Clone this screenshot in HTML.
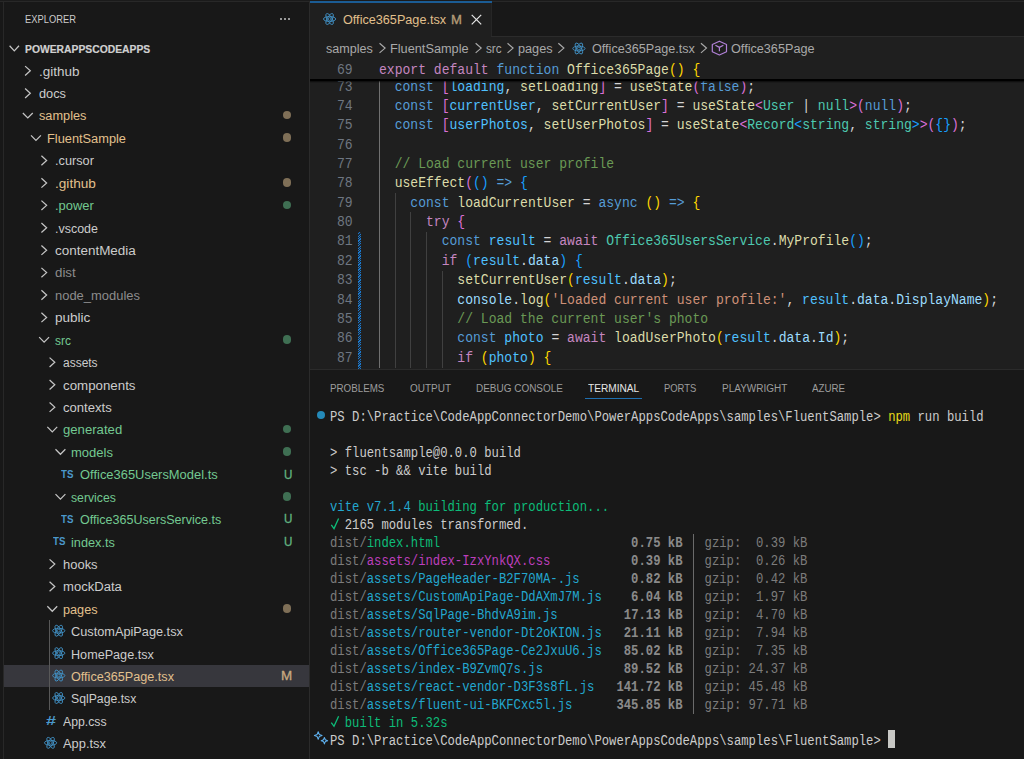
<!DOCTYPE html>
<html><head><meta charset="utf-8"><title>VS Code</title>
<style>
html,body{margin:0;padding:0;background:#181818;}
body{width:1024px;height:759px;position:relative;overflow:hidden;font-family:"Liberation Sans",sans-serif;}
.m{position:absolute;white-space:pre;font-family:"Liberation Mono",monospace;transform-origin:0 0;}
.s{position:absolute;white-space:pre;font-family:"Liberation Sans",sans-serif;transform-origin:0 0;}
</style></head><body>
<div style="position:absolute;left:0.00px;top:0.00px;width:1024.00px;height:759.00px;background:#181818;"></div>
<div style="position:absolute;left:0.00px;top:0.00px;width:1024.00px;height:1.00px;background:#1b1b1b;"></div>
<div style="position:absolute;left:0.00px;top:1.00px;width:1024.00px;height:1.00px;background:#282828;"></div>
<div style="position:absolute;left:3.00px;top:2.00px;width:1.10px;height:759.00px;background:#282828;"></div>
<div style="position:absolute;left:309.00px;top:2.00px;width:1.00px;height:759.00px;background:#2b2b2b;"></div>
<div style="position:absolute;left:310.00px;top:2.00px;width:714.00px;height:34.00px;background:#181818;"></div>
<div style="position:absolute;left:310.00px;top:35.60px;width:714.00px;height:1.00px;background:#2b2b2b;"></div>
<div style="position:absolute;left:310.00px;top:2.00px;width:180.90px;height:35.00px;background:#1f1f1f;"></div>
<div style="position:absolute;left:490.90px;top:3.00px;width:1.00px;height:33.00px;background:#262626;"></div>
<div style="position:absolute;left:310.00px;top:1.00px;width:181.50px;height:2.10px;background:#1b5c94;"></div>
<div style="position:absolute;left:310.00px;top:36.60px;width:714.00px;height:332.40px;background:#1f1f1f;"></div>
<div style="position:absolute;left:280.20px;top:18.30px;width:2.1px;height:2.1px;border-radius:50%;background:#c4c4c4"></div>
<div style="position:absolute;left:284.30px;top:18.30px;width:2.1px;height:2.1px;border-radius:50%;background:#c4c4c4"></div>
<div style="position:absolute;left:288.40px;top:18.30px;width:2.1px;height:2.1px;border-radius:50%;background:#c4c4c4"></div>
<svg style="position:absolute;left:8px;top:44px;overflow:visible" width="14" height="9"><g transform="translate(0.60 0.75)"><path d="M1.00 1.00 L5.70 6.10 L10.40 1.00" fill="none" stroke="#c5c5c5" stroke-width="1.25"/></g></svg>
<div style="position:absolute;left:4.00px;top:664.90px;width:305.00px;height:22.20px;background:#37373d;"></div>
<div style="position:absolute;left:49.30px;top:620.20px;width:1.00px;height:89.60px;background:#585858;"></div>
<svg style="position:absolute;left:24px;top:65px;overflow:visible" width="9" height="13"><g transform="translate(0.10 0.10)"><path d="M1.00 1.00 L6.20 5.70 L1.00 10.40" fill="none" stroke="#c5c5c5" stroke-width="1.25"/></g></svg>
<svg style="position:absolute;left:24px;top:87px;overflow:visible" width="9" height="13"><g transform="translate(0.10 0.52)"><path d="M1.00 1.00 L6.20 5.70 L1.00 10.40" fill="none" stroke="#c5c5c5" stroke-width="1.25"/></g></svg>
<svg style="position:absolute;left:21px;top:111px;overflow:visible" width="14" height="9"><g transform="translate(0.85 0.95)"><path d="M1.00 1.00 L5.95 6.00 L10.90 1.00" fill="none" stroke="#c5c5c5" stroke-width="1.25"/></g></svg>
<div style="position:absolute;left:283.10px;top:110.95px;width:8.4px;height:8.4px;border-radius:50%;background:#7f6f57"></div>
<svg style="position:absolute;left:30px;top:134px;overflow:visible" width="13" height="9"><g transform="translate(0.01 0.37)"><path d="M1.00 1.00 L5.95 6.00 L10.90 1.00" fill="none" stroke="#c5c5c5" stroke-width="1.25"/></g></svg>
<div style="position:absolute;left:283.10px;top:133.37px;width:8.4px;height:8.4px;border-radius:50%;background:#7f6f57"></div>
<svg style="position:absolute;left:40px;top:154px;overflow:visible" width="9" height="14"><g transform="translate(0.42 0.79)"><path d="M1.00 1.00 L6.20 5.70 L1.00 10.40" fill="none" stroke="#c5c5c5" stroke-width="1.25"/></g></svg>
<svg style="position:absolute;left:40px;top:177px;overflow:visible" width="9" height="13"><g transform="translate(0.42 0.22)"><path d="M1.00 1.00 L6.20 5.70 L1.00 10.40" fill="none" stroke="#c5c5c5" stroke-width="1.25"/></g></svg>
<div style="position:absolute;left:283.10px;top:178.22px;width:8.4px;height:8.4px;border-radius:50%;background:#7f6f57"></div>
<svg style="position:absolute;left:40px;top:199px;overflow:visible" width="9" height="14"><g transform="translate(0.42 0.64)"><path d="M1.00 1.00 L6.20 5.70 L1.00 10.40" fill="none" stroke="#c5c5c5" stroke-width="1.25"/></g></svg>
<div style="position:absolute;left:283.10px;top:200.64px;width:8.4px;height:8.4px;border-radius:50%;background:#3f6f53"></div>
<svg style="position:absolute;left:40px;top:222px;overflow:visible" width="9" height="13"><g transform="translate(0.42 0.06)"><path d="M1.00 1.00 L6.20 5.70 L1.00 10.40" fill="none" stroke="#c5c5c5" stroke-width="1.25"/></g></svg>
<svg style="position:absolute;left:40px;top:244px;overflow:visible" width="9" height="13"><g transform="translate(0.42 0.48)"><path d="M1.00 1.00 L6.20 5.70 L1.00 10.40" fill="none" stroke="#c5c5c5" stroke-width="1.25"/></g></svg>
<svg style="position:absolute;left:40px;top:266px;overflow:visible" width="9" height="14"><g transform="translate(0.42 0.91)"><path d="M1.00 1.00 L6.20 5.70 L1.00 10.40" fill="none" stroke="#c5c5c5" stroke-width="1.25"/></g></svg>
<svg style="position:absolute;left:40px;top:289px;overflow:visible" width="9" height="13"><g transform="translate(0.42 0.33)"><path d="M1.00 1.00 L6.20 5.70 L1.00 10.40" fill="none" stroke="#c5c5c5" stroke-width="1.25"/></g></svg>
<svg style="position:absolute;left:40px;top:311px;overflow:visible" width="9" height="14"><g transform="translate(0.42 0.75)"><path d="M1.00 1.00 L6.20 5.70 L1.00 10.40" fill="none" stroke="#c5c5c5" stroke-width="1.25"/></g></svg>
<svg style="position:absolute;left:38px;top:336px;overflow:visible" width="14" height="9"><g transform="translate(0.17 0.18)"><path d="M1.00 1.00 L5.95 6.00 L10.90 1.00" fill="none" stroke="#c5c5c5" stroke-width="1.25"/></g></svg>
<div style="position:absolute;left:283.10px;top:335.18px;width:8.4px;height:8.4px;border-radius:50%;background:#3f6f53"></div>
<svg style="position:absolute;left:48px;top:356px;overflow:visible" width="9" height="13"><g transform="translate(0.58 0.60)"><path d="M1.00 1.00 L6.20 5.70 L1.00 10.40" fill="none" stroke="#c5c5c5" stroke-width="1.25"/></g></svg>
<svg style="position:absolute;left:48px;top:379px;overflow:visible" width="9" height="13"><g transform="translate(0.58 0.02)"><path d="M1.00 1.00 L6.20 5.70 L1.00 10.40" fill="none" stroke="#c5c5c5" stroke-width="1.25"/></g></svg>
<svg style="position:absolute;left:48px;top:401px;overflow:visible" width="9" height="13"><g transform="translate(0.58 0.44)"><path d="M1.00 1.00 L6.20 5.70 L1.00 10.40" fill="none" stroke="#c5c5c5" stroke-width="1.25"/></g></svg>
<svg style="position:absolute;left:46px;top:425px;overflow:visible" width="14" height="9"><g transform="translate(0.33 0.87)"><path d="M1.00 1.00 L5.95 6.00 L10.90 1.00" fill="none" stroke="#c5c5c5" stroke-width="1.25"/></g></svg>
<div style="position:absolute;left:283.10px;top:424.87px;width:8.4px;height:8.4px;border-radius:50%;background:#3f6f53"></div>
<svg style="position:absolute;left:54px;top:448px;overflow:visible" width="14" height="9"><g transform="translate(0.49 0.29)"><path d="M1.00 1.00 L5.95 6.00 L10.90 1.00" fill="none" stroke="#c5c5c5" stroke-width="1.25"/></g></svg>
<div style="position:absolute;left:283.10px;top:447.29px;width:8.4px;height:8.4px;border-radius:50%;background:#3f6f53"></div>
<svg style="position:absolute;left:54px;top:493px;overflow:visible" width="14" height="9"><g transform="translate(0.49 0.14)"><path d="M1.00 1.00 L5.95 6.00 L10.90 1.00" fill="none" stroke="#c5c5c5" stroke-width="1.25"/></g></svg>
<div style="position:absolute;left:283.10px;top:492.14px;width:8.4px;height:8.4px;border-radius:50%;background:#3f6f53"></div>
<svg style="position:absolute;left:48px;top:558px;overflow:visible" width="9" height="13"><g transform="translate(0.58 0.41)"><path d="M1.00 1.00 L6.20 5.70 L1.00 10.40" fill="none" stroke="#c5c5c5" stroke-width="1.25"/></g></svg>
<svg style="position:absolute;left:48px;top:580px;overflow:visible" width="9" height="14"><g transform="translate(0.58 0.83)"><path d="M1.00 1.00 L6.20 5.70 L1.00 10.40" fill="none" stroke="#c5c5c5" stroke-width="1.25"/></g></svg>
<svg style="position:absolute;left:46px;top:605px;overflow:visible" width="14" height="9"><g transform="translate(0.33 0.25)"><path d="M1.00 1.00 L5.95 6.00 L10.90 1.00" fill="none" stroke="#c5c5c5" stroke-width="1.25"/></g></svg>
<div style="position:absolute;left:283.10px;top:604.25px;width:8.4px;height:8.4px;border-radius:50%;background:#7f6f57"></div>
<svg style="position:absolute;left:52px;top:624px;overflow:visible" width="15" height="15"><g transform="translate(0.29 0.27)"><g transform="translate(6.45 6.45) scale(0.6450)" fill="none" stroke="#4293c9" stroke-width="1.36"><ellipse rx="9.5" ry="3.8"/><ellipse rx="9.5" ry="3.8" transform="rotate(60)"/><ellipse rx="9.5" ry="3.8" transform="rotate(120)"/><circle r="2.2" stroke-width="1.24"/></g></g></svg>
<svg style="position:absolute;left:52px;top:646px;overflow:visible" width="15" height="15"><g transform="translate(0.29 0.70)"><g transform="translate(6.45 6.45) scale(0.6450)" fill="none" stroke="#4293c9" stroke-width="1.36"><ellipse rx="9.5" ry="3.8"/><ellipse rx="9.5" ry="3.8" transform="rotate(60)"/><ellipse rx="9.5" ry="3.8" transform="rotate(120)"/><circle r="2.2" stroke-width="1.24"/></g></g></svg>
<svg style="position:absolute;left:52px;top:669px;overflow:visible" width="15" height="15"><g transform="translate(0.29 0.12)"><g transform="translate(6.45 6.45) scale(0.6450)" fill="none" stroke="#4293c9" stroke-width="1.36"><ellipse rx="9.5" ry="3.8"/><ellipse rx="9.5" ry="3.8" transform="rotate(60)"/><ellipse rx="9.5" ry="3.8" transform="rotate(120)"/><circle r="2.2" stroke-width="1.24"/></g></g></svg>
<svg style="position:absolute;left:52px;top:691px;overflow:visible" width="15" height="15"><g transform="translate(0.29 0.54)"><g transform="translate(6.45 6.45) scale(0.6450)" fill="none" stroke="#4293c9" stroke-width="1.36"><ellipse rx="9.5" ry="3.8"/><ellipse rx="9.5" ry="3.8" transform="rotate(60)"/><ellipse rx="9.5" ry="3.8" transform="rotate(120)"/><circle r="2.2" stroke-width="1.24"/></g></g></svg>
<svg style="position:absolute;left:44px;top:736px;overflow:visible" width="15" height="15"><g transform="translate(0.13 0.39)"><g transform="translate(6.45 6.45) scale(0.6450)" fill="none" stroke="#4293c9" stroke-width="1.36"><ellipse rx="9.5" ry="3.8"/><ellipse rx="9.5" ry="3.8" transform="rotate(60)"/><ellipse rx="9.5" ry="3.8" transform="rotate(120)"/><circle r="2.2" stroke-width="1.24"/></g></g></svg>
<svg style="position:absolute;left:323px;top:12px;overflow:visible" width="15" height="15"><g transform="translate(0.15 0.55)"><g transform="translate(6.45 6.45) scale(0.6450)" fill="none" stroke="#4293c9" stroke-width="1.36"><ellipse rx="9.5" ry="3.8"/><ellipse rx="9.5" ry="3.8" transform="rotate(60)"/><ellipse rx="9.5" ry="3.8" transform="rotate(120)"/><circle r="2.2" stroke-width="1.24"/></g></g></svg>
<svg style="position:absolute;left:471px;top:14px;overflow:visible" width="13" height="13"><g transform="translate(0.00 0.00)"><path d="M0.7 0.9 L10.2 10.4 M10.2 0.9 L0.7 10.4" stroke="#e6e6e6" stroke-width="1.25" fill="none"/></g></svg>
<svg style="position:absolute;left:378px;top:42px;overflow:visible" width="10" height="13"><g transform="translate(0.55 0.30)"><path d="M1.00 1.00 L6.50 5.80 L1.00 10.60" fill="none" stroke="#a9a9a9" stroke-width="1.20"/></g></svg>
<svg style="position:absolute;left:474px;top:42px;overflow:visible" width="10" height="13"><g transform="translate(0.65 0.30)"><path d="M1.00 1.00 L6.50 5.80 L1.00 10.60" fill="none" stroke="#a9a9a9" stroke-width="1.20"/></g></svg>
<svg style="position:absolute;left:506px;top:42px;overflow:visible" width="10" height="13"><g transform="translate(0.55 0.30)"><path d="M1.00 1.00 L6.50 5.80 L1.00 10.60" fill="none" stroke="#a9a9a9" stroke-width="1.20"/></g></svg>
<svg style="position:absolute;left:557px;top:42px;overflow:visible" width="9" height="13"><g transform="translate(0.35 0.30)"><path d="M1.00 1.00 L6.50 5.80 L1.00 10.60" fill="none" stroke="#a9a9a9" stroke-width="1.20"/></g></svg>
<svg style="position:absolute;left:572px;top:42px;overflow:visible" width="15" height="14"><g transform="translate(0.45 0.05)"><g transform="translate(6.45 6.45) scale(0.6450)" fill="none" stroke="#4293c9" stroke-width="1.36"><ellipse rx="9.5" ry="3.8"/><ellipse rx="9.5" ry="3.8" transform="rotate(60)"/><ellipse rx="9.5" ry="3.8" transform="rotate(120)"/><circle r="2.2" stroke-width="1.24"/></g></g></svg>
<svg style="position:absolute;left:699px;top:42px;overflow:visible" width="10" height="13"><g transform="translate(0.95 0.30)"><path d="M1.00 1.00 L6.50 5.80 L1.00 10.60" fill="none" stroke="#a9a9a9" stroke-width="1.20"/></g></svg>
<svg style="position:absolute;left:711px;top:40px;overflow:visible" width="18" height="17"><g transform="translate(0.00 0.00)"><path d="M8.4 1.2 L15.5 4.5 L15.5 11.7 L8.4 15.0 L1.3 11.7 L1.3 4.5 Z M4.4 5.3 L8.4 7.4 L12.4 5.3 M8.4 7.4 L8.4 11.3" fill="none" stroke="#b180d7" stroke-width="1.2" stroke-linejoin="round"/></g></svg>
<div style="position:absolute;left:378.90px;top:76.82px;width:1.00px;height:290.70px;background:#707070;"></div>
<div style="position:absolute;left:394.57px;top:193.10px;width:1.00px;height:174.42px;background:#404040;"></div>
<div style="position:absolute;left:410.24px;top:212.48px;width:1.00px;height:155.04px;background:#404040;"></div>
<div style="position:absolute;left:425.91px;top:231.86px;width:1.00px;height:135.66px;background:#404040;"></div>
<div style="position:absolute;left:441.58px;top:270.62px;width:1.00px;height:96.90px;background:#404040;"></div>
<div style="position:absolute;left:358.2px;top:231.86px;width:3px;height:137.54px;background:repeating-linear-gradient(-45deg,#1a78cc 0,#1a78cc 0.9px,#1f2a36 0.9px,#1f2a36 1.7px)"></div>
<div class="m" style="left:336.60px;top:78.16px;font-size:13.80px;line-height:19.38px;height:19.38px;transform:scaleX(0.9463);"><span style="color:#6e7681">73</span></div>
<div class="m" style="left:379.20px;top:78.16px;font-size:13.80px;line-height:19.38px;height:19.38px;transform:scaleX(0.9463);"><span style="color:#d4d4d4">  </span><span style="color:#569cd6">const</span><span style="color:#d4d4d4"> </span><span style="color:#da70d6">[</span><span style="color:#4fc1ff">loading</span><span style="color:#d4d4d4">, </span><span style="color:#dcdcaa">setLoading</span><span style="color:#da70d6">]</span><span style="color:#d4d4d4"> = </span><span style="color:#dcdcaa">useState</span><span style="color:#da70d6">(</span><span style="color:#569cd6">false</span><span style="color:#da70d6">)</span><span style="color:#d4d4d4">;</span></div>
<div class="m" style="left:336.60px;top:96.74px;font-size:13.80px;line-height:19.38px;height:19.38px;transform:scaleX(0.9463);"><span style="color:#6e7681">74</span></div>
<div class="m" style="left:379.20px;top:96.74px;font-size:13.80px;line-height:19.38px;height:19.38px;transform:scaleX(0.9463);"><span style="color:#d4d4d4">  </span><span style="color:#569cd6">const</span><span style="color:#d4d4d4"> </span><span style="color:#da70d6">[</span><span style="color:#4fc1ff">currentUser</span><span style="color:#d4d4d4">, </span><span style="color:#dcdcaa">setCurrentUser</span><span style="color:#da70d6">]</span><span style="color:#d4d4d4"> = </span><span style="color:#dcdcaa">useState</span><span style="color:#da70d6">&lt;</span><span style="color:#4ec9b0">User</span><span style="color:#d4d4d4"> | </span><span style="color:#4ec9b0">null</span><span style="color:#da70d6">&gt;</span><span style="color:#da70d6">(</span><span style="color:#569cd6">null</span><span style="color:#da70d6">)</span><span style="color:#d4d4d4">;</span></div>
<div class="m" style="left:336.60px;top:116.12px;font-size:13.80px;line-height:19.38px;height:19.38px;transform:scaleX(0.9463);"><span style="color:#6e7681">75</span></div>
<div class="m" style="left:379.20px;top:116.12px;font-size:13.80px;line-height:19.38px;height:19.38px;transform:scaleX(0.9463);"><span style="color:#d4d4d4">  </span><span style="color:#569cd6">const</span><span style="color:#d4d4d4"> </span><span style="color:#da70d6">[</span><span style="color:#4fc1ff">userPhotos</span><span style="color:#d4d4d4">, </span><span style="color:#dcdcaa">setUserPhotos</span><span style="color:#da70d6">]</span><span style="color:#d4d4d4"> = </span><span style="color:#dcdcaa">useState</span><span style="color:#da70d6">&lt;</span><span style="color:#4ec9b0">Record</span><span style="color:#179fff">&lt;</span><span style="color:#4ec9b0">string</span><span style="color:#d4d4d4">, </span><span style="color:#4ec9b0">string</span><span style="color:#179fff">&gt;</span><span style="color:#da70d6">&gt;</span><span style="color:#da70d6">(</span><span style="color:#179fff">{}</span><span style="color:#da70d6">)</span><span style="color:#d4d4d4">;</span></div>
<div class="m" style="left:336.60px;top:135.50px;font-size:13.80px;line-height:19.38px;height:19.38px;transform:scaleX(0.9463);"><span style="color:#6e7681">76</span></div>
<div class="m" style="left:336.60px;top:154.88px;font-size:13.80px;line-height:19.38px;height:19.38px;transform:scaleX(0.9463);"><span style="color:#6e7681">77</span></div>
<div class="m" style="left:379.20px;top:154.88px;font-size:13.80px;line-height:19.38px;height:19.38px;transform:scaleX(0.9463);"><span style="color:#d4d4d4">  </span><span style="color:#6a9955">// Load current user profile</span></div>
<div class="m" style="left:336.60px;top:174.26px;font-size:13.80px;line-height:19.38px;height:19.38px;transform:scaleX(0.9463);"><span style="color:#6e7681">78</span></div>
<div class="m" style="left:379.20px;top:174.26px;font-size:13.80px;line-height:19.38px;height:19.38px;transform:scaleX(0.9463);"><span style="color:#d4d4d4">  </span><span style="color:#dcdcaa">useEffect</span><span style="color:#da70d6">(</span><span style="color:#179fff">()</span><span style="color:#d4d4d4"> </span><span style="color:#569cd6">=&gt;</span><span style="color:#d4d4d4"> </span><span style="color:#179fff">{</span></div>
<div class="m" style="left:336.60px;top:193.64px;font-size:13.80px;line-height:19.38px;height:19.38px;transform:scaleX(0.9463);"><span style="color:#6e7681">79</span></div>
<div class="m" style="left:379.20px;top:193.64px;font-size:13.80px;line-height:19.38px;height:19.38px;transform:scaleX(0.9463);"><span style="color:#d4d4d4">    </span><span style="color:#569cd6">const</span><span style="color:#d4d4d4"> </span><span style="color:#dcdcaa">loadCurrentUser</span><span style="color:#d4d4d4"> = </span><span style="color:#569cd6">async</span><span style="color:#d4d4d4"> </span><span style="color:#ffd700">()</span><span style="color:#d4d4d4"> </span><span style="color:#569cd6">=&gt;</span><span style="color:#d4d4d4"> </span><span style="color:#ffd700">{</span></div>
<div class="m" style="left:336.60px;top:213.02px;font-size:13.80px;line-height:19.38px;height:19.38px;transform:scaleX(0.9463);"><span style="color:#6e7681">80</span></div>
<div class="m" style="left:379.20px;top:213.02px;font-size:13.80px;line-height:19.38px;height:19.38px;transform:scaleX(0.9463);"><span style="color:#d4d4d4">      </span><span style="color:#c586c0">try</span><span style="color:#d4d4d4"> </span><span style="color:#da70d6">{</span></div>
<div class="m" style="left:336.60px;top:232.40px;font-size:13.80px;line-height:19.38px;height:19.38px;transform:scaleX(0.9463);"><span style="color:#6e7681">81</span></div>
<div class="m" style="left:379.20px;top:232.40px;font-size:13.80px;line-height:19.38px;height:19.38px;transform:scaleX(0.9463);"><span style="color:#d4d4d4">        </span><span style="color:#569cd6">const</span><span style="color:#d4d4d4"> </span><span style="color:#4fc1ff">result</span><span style="color:#d4d4d4"> = </span><span style="color:#c586c0">await</span><span style="color:#d4d4d4"> </span><span style="color:#4ec9b0">Office365UsersService</span><span style="color:#d4d4d4">.</span><span style="color:#dcdcaa">MyProfile</span><span style="color:#179fff">()</span><span style="color:#d4d4d4">;</span></div>
<div class="m" style="left:336.60px;top:251.78px;font-size:13.80px;line-height:19.38px;height:19.38px;transform:scaleX(0.9463);"><span style="color:#6e7681">82</span></div>
<div class="m" style="left:379.20px;top:251.78px;font-size:13.80px;line-height:19.38px;height:19.38px;transform:scaleX(0.9463);"><span style="color:#d4d4d4">        </span><span style="color:#c586c0">if</span><span style="color:#d4d4d4"> </span><span style="color:#179fff">(</span><span style="color:#4fc1ff">result</span><span style="color:#d4d4d4">.</span><span style="color:#9cdcfe">data</span><span style="color:#179fff">)</span><span style="color:#d4d4d4"> </span><span style="color:#179fff">{</span></div>
<div class="m" style="left:336.60px;top:271.16px;font-size:13.80px;line-height:19.38px;height:19.38px;transform:scaleX(0.9463);"><span style="color:#6e7681">83</span></div>
<div class="m" style="left:379.20px;top:271.16px;font-size:13.80px;line-height:19.38px;height:19.38px;transform:scaleX(0.9463);"><span style="color:#d4d4d4">          </span><span style="color:#dcdcaa">setCurrentUser</span><span style="color:#ffd700">(</span><span style="color:#4fc1ff">result</span><span style="color:#d4d4d4">.</span><span style="color:#9cdcfe">data</span><span style="color:#ffd700">)</span><span style="color:#d4d4d4">;</span></div>
<div class="m" style="left:336.60px;top:290.54px;font-size:13.80px;line-height:19.38px;height:19.38px;transform:scaleX(0.9463);"><span style="color:#6e7681">84</span></div>
<div class="m" style="left:379.20px;top:290.54px;font-size:13.80px;line-height:19.38px;height:19.38px;transform:scaleX(0.9463);"><span style="color:#d4d4d4">          </span><span style="color:#9cdcfe">console</span><span style="color:#d4d4d4">.</span><span style="color:#dcdcaa">log</span><span style="color:#ffd700">(</span><span style="color:#ce9178">&#x27;Loaded current user profile:&#x27;</span><span style="color:#d4d4d4">, </span><span style="color:#4fc1ff">result</span><span style="color:#d4d4d4">.</span><span style="color:#9cdcfe">data</span><span style="color:#d4d4d4">.</span><span style="color:#9cdcfe">DisplayName</span><span style="color:#ffd700">)</span><span style="color:#d4d4d4">;</span></div>
<div class="m" style="left:336.60px;top:309.92px;font-size:13.80px;line-height:19.38px;height:19.38px;transform:scaleX(0.9463);"><span style="color:#6e7681">85</span></div>
<div class="m" style="left:379.20px;top:309.92px;font-size:13.80px;line-height:19.38px;height:19.38px;transform:scaleX(0.9463);"><span style="color:#d4d4d4">          </span><span style="color:#6a9955">// Load the current user&#x27;s photo</span></div>
<div class="m" style="left:336.60px;top:329.30px;font-size:13.80px;line-height:19.38px;height:19.38px;transform:scaleX(0.9463);"><span style="color:#6e7681">86</span></div>
<div class="m" style="left:379.20px;top:329.30px;font-size:13.80px;line-height:19.38px;height:19.38px;transform:scaleX(0.9463);"><span style="color:#d4d4d4">          </span><span style="color:#569cd6">const</span><span style="color:#d4d4d4"> </span><span style="color:#4fc1ff">photo</span><span style="color:#d4d4d4"> = </span><span style="color:#c586c0">await</span><span style="color:#d4d4d4"> </span><span style="color:#dcdcaa">loadUserPhoto</span><span style="color:#ffd700">(</span><span style="color:#4fc1ff">result</span><span style="color:#d4d4d4">.</span><span style="color:#9cdcfe">data</span><span style="color:#d4d4d4">.</span><span style="color:#9cdcfe">Id</span><span style="color:#ffd700">)</span><span style="color:#d4d4d4">;</span></div>
<div class="m" style="left:336.60px;top:348.68px;font-size:13.80px;line-height:19.38px;height:19.38px;transform:scaleX(0.9463);"><span style="color:#6e7681">87</span></div>
<div class="m" style="left:379.20px;top:348.68px;font-size:13.80px;line-height:19.38px;height:19.38px;transform:scaleX(0.9463);"><span style="color:#d4d4d4">          </span><span style="color:#c586c0">if</span><span style="color:#d4d4d4"> </span><span style="color:#ffd700">(</span><span style="color:#4fc1ff">photo</span><span style="color:#ffd700">)</span><span style="color:#d4d4d4"> </span><span style="color:#ffd700">{</span></div>
<div style="position:absolute;left:310.00px;top:59.40px;width:714.00px;height:19.40px;background:#1f1f1f;"></div>
<div style="position:absolute;left:310px;top:78.8px;width:714px;height:4px;background:linear-gradient(#000 0,#000 40%,rgba(0,0,0,.5) 62%,rgba(0,0,0,0) 100%)"></div>
<div class="m" style="left:336.60px;top:60.54px;font-size:13.80px;line-height:19.38px;height:19.38px;transform:scaleX(0.9463);"><span style="color:#6e7681">69</span></div>
<div class="m" style="left:379.20px;top:60.54px;font-size:13.80px;line-height:19.38px;height:19.38px;transform:scaleX(0.9463);"><span style="color:#c586c0">export default</span><span style="color:#d4d4d4"> </span><span style="color:#569cd6">function</span><span style="color:#d4d4d4"> </span><span style="color:#dcdcaa">Office365Page</span><span style="color:#ffd700">()</span><span style="color:#d4d4d4"> </span><span style="color:#ffd700">{</span></div>
<div style="position:absolute;left:310.00px;top:369.40px;width:714.00px;height:389.60px;background:#181818;"></div>
<div style="position:absolute;left:310.00px;top:369.00px;width:714.00px;height:1.00px;background:#2b2b2b;"></div>
<div style="position:absolute;left:585.20px;top:398.20px;width:56.60px;height:1.10px;background:#1f6fb0;"></div>
<div class="m" style="left:330.40px;top:409.34px;font-size:13.80px;line-height:17.97px;height:17.97px;transform:scaleX(0.8870);"><span style="color:#cccccc">PS D:\Practice\CodeAppConnectorDemo\PowerAppsCodeApps\samples\FluentSample&gt; </span><span style="color:#e8dc18">npm</span><span style="color:#cccccc"> run build</span></div>
<div class="m" style="left:330.40px;top:445.28px;font-size:13.80px;line-height:17.97px;height:17.97px;transform:scaleX(0.8870);"><span style="color:#cccccc">&gt; fluentsample@0.0.0 build</span></div>
<div class="m" style="left:330.40px;top:463.25px;font-size:13.80px;line-height:17.97px;height:17.97px;transform:scaleX(0.8870);"><span style="color:#cccccc">&gt; tsc -b &amp;&amp; vite build</span></div>
<div class="m" style="left:330.40px;top:499.19px;font-size:13.80px;line-height:17.97px;height:17.97px;transform:scaleX(0.8870);"><span style="color:#23a7cf">vite v7.1.4 </span><span style="color:#0dbc79">building for production...</span></div>
<div class="m" style="left:330.40px;top:517.16px;font-size:13.80px;line-height:17.97px;height:17.97px;transform:scaleX(0.8870);"><span style="color:#0dbc79">  </span><span style="color:#cccccc">2165 modules transformed.</span></div>
<div class="m" style="left:330.40px;top:714.83px;font-size:13.80px;line-height:17.97px;height:17.97px;transform:scaleX(0.8870);"><span style="color:#0dbc79">  built in 5.32s</span></div>
<div class="m" style="left:330.40px;top:732.80px;font-size:13.80px;line-height:17.97px;height:17.97px;transform:scaleX(0.8870);"><span style="color:#cccccc">PS D:\Practice\CodeAppConnectorDemo\PowerAppsCodeApps\samples\FluentSample&gt;</span></div>
<div class="m" style="left:330.40px;top:535.13px;font-size:13.80px;line-height:17.97px;height:17.97px;transform:scaleX(0.8870);"><span style="color:#7c7c7c">dist/</span><span style="color:#0dbc79">index.html</span><span style="color:#cccccc">                        </span><span style="color:#8a8a8a;font-weight:700">  0.75 kB</span><span style="color:#7c7c7c">   gzip:  0.39 kB</span></div>
<div class="m" style="left:330.40px;top:553.10px;font-size:13.80px;line-height:17.97px;height:17.97px;transform:scaleX(0.8870);"><span style="color:#7c7c7c">dist/</span><span style="color:#bc3fbc">assets/index-IzxYnkQX.css</span><span style="color:#cccccc">         </span><span style="color:#8a8a8a;font-weight:700">  0.39 kB</span><span style="color:#7c7c7c">   gzip:  0.26 kB</span></div>
<div class="m" style="left:330.40px;top:571.07px;font-size:13.80px;line-height:17.97px;height:17.97px;transform:scaleX(0.8870);"><span style="color:#7c7c7c">dist/</span><span style="color:#23a7cf">assets/PageHeader-B2F70MA-.js</span><span style="color:#cccccc">     </span><span style="color:#8a8a8a;font-weight:700">  0.82 kB</span><span style="color:#7c7c7c">   gzip:  0.42 kB</span></div>
<div class="m" style="left:330.40px;top:589.04px;font-size:13.80px;line-height:17.97px;height:17.97px;transform:scaleX(0.8870);"><span style="color:#7c7c7c">dist/</span><span style="color:#23a7cf">assets/CustomApiPage-DdAXmJ7M.js</span><span style="color:#cccccc">  </span><span style="color:#8a8a8a;font-weight:700">  6.04 kB</span><span style="color:#7c7c7c">   gzip:  1.97 kB</span></div>
<div class="m" style="left:330.40px;top:607.01px;font-size:13.80px;line-height:17.97px;height:17.97px;transform:scaleX(0.8870);"><span style="color:#7c7c7c">dist/</span><span style="color:#23a7cf">assets/SqlPage-BhdvA9im.js</span><span style="color:#cccccc">        </span><span style="color:#8a8a8a;font-weight:700"> 17.13 kB</span><span style="color:#7c7c7c">   gzip:  4.70 kB</span></div>
<div class="m" style="left:330.40px;top:624.98px;font-size:13.80px;line-height:17.97px;height:17.97px;transform:scaleX(0.8870);"><span style="color:#7c7c7c">dist/</span><span style="color:#23a7cf">assets/router-vendor-Dt2oKION.js</span><span style="color:#cccccc">  </span><span style="color:#8a8a8a;font-weight:700"> 21.11 kB</span><span style="color:#7c7c7c">   gzip:  7.94 kB</span></div>
<div class="m" style="left:330.40px;top:642.95px;font-size:13.80px;line-height:17.97px;height:17.97px;transform:scaleX(0.8870);"><span style="color:#7c7c7c">dist/</span><span style="color:#23a7cf">assets/Office365Page-Ce2JxuU6.js</span><span style="color:#cccccc">  </span><span style="color:#8a8a8a;font-weight:700"> 85.02 kB</span><span style="color:#7c7c7c">   gzip:  7.35 kB</span></div>
<div class="m" style="left:330.40px;top:660.92px;font-size:13.80px;line-height:17.97px;height:17.97px;transform:scaleX(0.8870);"><span style="color:#7c7c7c">dist/</span><span style="color:#23a7cf">assets/index-B9ZvmQ7s.js</span><span style="color:#cccccc">          </span><span style="color:#8a8a8a;font-weight:700"> 89.52 kB</span><span style="color:#7c7c7c">   gzip: 24.37 kB</span></div>
<div class="m" style="left:330.40px;top:678.89px;font-size:13.80px;line-height:17.97px;height:17.97px;transform:scaleX(0.8870);"><span style="color:#7c7c7c">dist/</span><span style="color:#23a7cf">assets/react-vendor-D3F3s8fL.js</span><span style="color:#cccccc">   </span><span style="color:#8a8a8a;font-weight:700">141.72 kB</span><span style="color:#7c7c7c">   gzip: 45.48 kB</span></div>
<div class="m" style="left:330.40px;top:696.86px;font-size:13.80px;line-height:17.97px;height:17.97px;transform:scaleX(0.8870);"><span style="color:#7c7c7c">dist/</span><span style="color:#23a7cf">assets/fluent-ui-BKFCxc5l.js</span><span style="color:#cccccc">      </span><span style="color:#8a8a8a;font-weight:700">345.85 kB</span><span style="color:#7c7c7c">   gzip: 97.71 kB</span></div>
<div style="position:absolute;left:693.30px;top:534.39px;width:1.00px;height:179.33px;background:#6a6a6a;"></div>
<svg style="position:absolute;left:330px;top:517px;overflow:visible" width="13" height="15"><g transform="translate(0.40 0.62)"><path d="M0.9 7.3 L3.6 11.0 L8.2 0.9" fill="none" stroke="#0dbc79" stroke-width="1.3"/></g></svg>
<svg style="position:absolute;left:330px;top:715px;overflow:visible" width="13" height="15"><g transform="translate(0.40 0.29)"><path d="M0.9 7.3 L3.6 11.0 L8.2 0.9" fill="none" stroke="#0dbc79" stroke-width="1.3"/></g></svg>
<div style="position:absolute;left:316.7px;top:410.9px;width:8.5px;height:8.5px;border-radius:50%;background:#2489b8"></div>
<svg style="position:absolute;left:310px;top:728px" width="22" height="20" viewBox="0 0 22 20"><path d="M8.20 3.70 L9.27 6.43 L12.00 7.50 L9.27 8.57 L8.20 11.30 L7.13 8.57 L4.40 7.50 L7.13 6.43 Z M14.40 9.50 L15.31 11.79 L17.60 12.70 L15.31 13.61 L14.40 15.90 L13.49 13.61 L11.20 12.70 L13.49 11.79 Z" fill="none" stroke="#5eb0ee" stroke-width="1.05" stroke-linejoin="round"/></svg>
<div style="position:absolute;left:887.94px;top:729.50px;width:7.30px;height:18.20px;background:#c8c8c5;"></div>
<div class="s" style="left:24.70px;top:12.22px;font-size:11.22px;line-height:14.59px;color:#cccccc;transform:scaleX(0.8329);">EXPLORER</div>
<div class="s" style="left:24.70px;top:42.12px;font-size:11.22px;line-height:14.59px;color:#d0d0d0;font-weight:700;-webkit-text-stroke:0.20px #d0d0d0;transform:scaleX(0.9212);">POWERAPPSCODEAPPS</div>
<div class="s" style="left:38.80px;top:62.65px;font-size:13.70px;line-height:17.81px;color:#cccccc;transform:scaleX(0.9852);">.github</div>
<div class="s" style="left:38.80px;top:85.07px;font-size:13.70px;line-height:17.81px;color:#cccccc;transform:scaleX(0.9335);">docs</div>
<div class="s" style="left:38.80px;top:107.49px;font-size:13.70px;line-height:17.81px;color:#e2c08d;transform:scaleX(0.9300);">samples</div>
<div class="s" style="left:46.96px;top:129.91px;font-size:13.70px;line-height:17.81px;color:#e2c08d;transform:scaleX(0.9354);">FluentSample</div>
<div class="s" style="left:55.12px;top:152.34px;font-size:13.70px;line-height:17.81px;color:#cccccc;transform:scaleX(0.9296);">.cursor</div>
<div class="s" style="left:55.12px;top:174.76px;font-size:13.70px;line-height:17.81px;color:#e2c08d;transform:scaleX(0.9949);">.github</div>
<div class="s" style="left:55.12px;top:197.18px;font-size:13.70px;line-height:17.81px;color:#73c991;transform:scaleX(0.9466);">.power</div>
<div class="s" style="left:55.12px;top:219.61px;font-size:13.70px;line-height:17.81px;color:#cccccc;transform:scaleX(0.9094);">.vscode</div>
<div class="s" style="left:55.12px;top:242.03px;font-size:13.70px;line-height:17.81px;color:#cccccc;transform:scaleX(0.9831);">contentMedia</div>
<div class="s" style="left:55.12px;top:264.45px;font-size:13.70px;line-height:17.81px;color:#8c8c8c;transform:scaleX(0.9713);">dist</div>
<div class="s" style="left:55.12px;top:286.88px;font-size:13.70px;line-height:17.81px;color:#8c8c8c;transform:scaleX(0.9464);">node_modules</div>
<div class="s" style="left:55.12px;top:309.30px;font-size:13.70px;line-height:17.81px;color:#cccccc;transform:scaleX(0.9898);">public</div>
<div class="s" style="left:55.12px;top:331.72px;font-size:13.70px;line-height:17.81px;color:#73c991;transform:scaleX(0.8712);">src</div>
<div class="s" style="left:63.28px;top:354.14px;font-size:13.70px;line-height:17.81px;color:#cccccc;transform:scaleX(0.8746);">assets</div>
<div class="s" style="left:63.28px;top:376.57px;font-size:13.70px;line-height:17.81px;color:#cccccc;transform:scaleX(0.9721);">components</div>
<div class="s" style="left:63.28px;top:398.99px;font-size:13.70px;line-height:17.81px;color:#cccccc;transform:scaleX(0.9572);">contexts</div>
<div class="s" style="left:63.28px;top:421.41px;font-size:13.70px;line-height:17.81px;color:#73c991;transform:scaleX(0.9602);">generated</div>
<div class="s" style="left:71.44px;top:443.84px;font-size:13.70px;line-height:17.81px;color:#73c991;transform:scaleX(0.9518);">models</div>
<div class="s" style="left:79.60px;top:466.26px;font-size:13.70px;line-height:17.81px;color:#73c991;transform:scaleX(0.9444);">Office365UsersModel.ts</div>
<div class="s" style="left:60.70px;top:465.85px;font-size:11.60px;line-height:15.08px;color:#4b98cc;font-weight:700;transform:scaleX(0.8362);">TS</div>
<div class="s" style="left:283.90px;top:467.52px;font-size:12.24px;line-height:15.91px;color:#62b381;-webkit-text-stroke:0.30px #62b381;transform:scaleX(0.9498);">U</div>
<div class="s" style="left:71.44px;top:488.68px;font-size:13.70px;line-height:17.81px;color:#73c991;transform:scaleX(0.8924);">services</div>
<div class="s" style="left:79.60px;top:511.11px;font-size:13.70px;line-height:17.81px;color:#73c991;transform:scaleX(0.9165);">Office365UsersService.ts</div>
<div class="s" style="left:60.70px;top:510.70px;font-size:11.60px;line-height:15.08px;color:#4b98cc;font-weight:700;transform:scaleX(0.8362);">TS</div>
<div class="s" style="left:283.90px;top:512.36px;font-size:12.24px;line-height:15.91px;color:#62b381;-webkit-text-stroke:0.30px #62b381;transform:scaleX(0.9498);">U</div>
<div class="s" style="left:71.44px;top:533.53px;font-size:13.70px;line-height:17.81px;color:#73c991;transform:scaleX(0.9306);">index.ts</div>
<div class="s" style="left:52.54px;top:533.12px;font-size:11.60px;line-height:15.08px;color:#4b98cc;font-weight:700;transform:scaleX(0.8362);">TS</div>
<div class="s" style="left:283.90px;top:534.78px;font-size:12.24px;line-height:15.91px;color:#62b381;-webkit-text-stroke:0.30px #62b381;transform:scaleX(0.9498);">U</div>
<div class="s" style="left:63.28px;top:555.95px;font-size:13.70px;line-height:17.81px;color:#cccccc;transform:scaleX(0.9471);">hooks</div>
<div class="s" style="left:63.28px;top:578.37px;font-size:13.70px;line-height:17.81px;color:#cccccc;transform:scaleX(0.9542);">mockData</div>
<div class="s" style="left:63.28px;top:600.80px;font-size:13.70px;line-height:17.81px;color:#e2c08d;transform:scaleX(0.9277);">pages</div>
<div class="s" style="left:71.44px;top:623.22px;font-size:13.70px;line-height:17.81px;color:#cccccc;transform:scaleX(0.9309);">CustomApiPage.tsx</div>
<div class="s" style="left:71.44px;top:645.64px;font-size:13.70px;line-height:17.81px;color:#cccccc;transform:scaleX(0.9222);">HomePage.tsx</div>
<div class="s" style="left:71.44px;top:668.07px;font-size:13.70px;line-height:17.81px;color:#e2c08d;transform:scaleX(0.9229);">Office365Page.tsx</div>
<div class="s" style="left:281.30px;top:669.42px;font-size:12.24px;line-height:15.91px;color:#c8ab80;-webkit-text-stroke:0.30px #c8ab80;transform:scaleX(1.0977);">M</div>
<div class="s" style="left:71.44px;top:690.49px;font-size:13.70px;line-height:17.81px;color:#cccccc;transform:scaleX(0.8939);">SqlPage.tsx</div>
<div class="s" style="left:63.28px;top:712.91px;font-size:13.70px;line-height:17.81px;color:#cccccc;transform:scaleX(0.8952);">App.css</div>
<div class="s" style="left:45.88px;top:712.01px;font-size:13.50px;line-height:17.55px;color:#4b98cc;font-weight:700;transform:scaleX(1.3306);">#</div>
<div class="s" style="left:63.28px;top:735.34px;font-size:13.70px;line-height:17.81px;color:#cccccc;transform:scaleX(0.9396);">App.tsx</div>
<div class="s" style="left:342.80px;top:10.85px;font-size:13.70px;line-height:17.81px;color:#e2c08d;transform:scaleX(0.9238);">Office365Page.tsx</div>
<div class="s" style="left:451.30px;top:11.84px;font-size:12.60px;line-height:16.38px;color:#b39c77;-webkit-text-stroke:0.35px #b39c77;transform:scaleX(1.0381);">M</div>
<div class="s" style="left:326.20px;top:40.35px;font-size:13.70px;line-height:17.81px;color:#a9a9a9;transform:scaleX(0.9182);">samples</div>
<div class="s" style="left:390.10px;top:40.35px;font-size:13.70px;line-height:17.81px;color:#a9a9a9;transform:scaleX(0.9307);">FluentSample</div>
<div class="s" style="left:485.60px;top:40.35px;font-size:13.70px;line-height:17.81px;color:#a9a9a9;transform:scaleX(0.8548);">src</div>
<div class="s" style="left:518.10px;top:40.35px;font-size:13.70px;line-height:17.81px;color:#a9a9a9;transform:scaleX(0.9277);">pages</div>
<div class="s" style="left:591.80px;top:40.35px;font-size:13.70px;line-height:17.81px;color:#a9a9a9;transform:scaleX(0.9220);">Office365Page.tsx</div>
<div class="s" style="left:731.10px;top:40.35px;font-size:13.70px;line-height:17.81px;color:#a9a9a9;transform:scaleX(0.9246);">Office365Page</div>
<div class="s" style="left:330.40px;top:380.92px;font-size:11.22px;line-height:14.59px;color:#9d9d9d;transform:scaleX(0.8724);">PROBLEMS</div>
<div class="s" style="left:409.70px;top:380.92px;font-size:11.22px;line-height:14.59px;color:#9d9d9d;transform:scaleX(0.8889);">OUTPUT</div>
<div class="s" style="left:475.90px;top:380.92px;font-size:11.22px;line-height:14.59px;color:#9d9d9d;transform:scaleX(0.8879);">DEBUG CONSOLE</div>
<div class="s" style="left:588.20px;top:380.92px;font-size:11.22px;line-height:14.59px;color:#e7e7e7;transform:scaleX(0.9025);">TERMINAL</div>
<div class="s" style="left:664.30px;top:380.92px;font-size:11.22px;line-height:14.59px;color:#9d9d9d;transform:scaleX(0.8400);">PORTS</div>
<div class="s" style="left:721.50px;top:380.92px;font-size:11.22px;line-height:14.59px;color:#9d9d9d;transform:scaleX(0.8903);">PLAYWRIGHT</div>
<div class="s" style="left:812.30px;top:380.92px;font-size:11.22px;line-height:14.59px;color:#9d9d9d;transform:scaleX(0.8703);">AZURE</div>
</body></html>
